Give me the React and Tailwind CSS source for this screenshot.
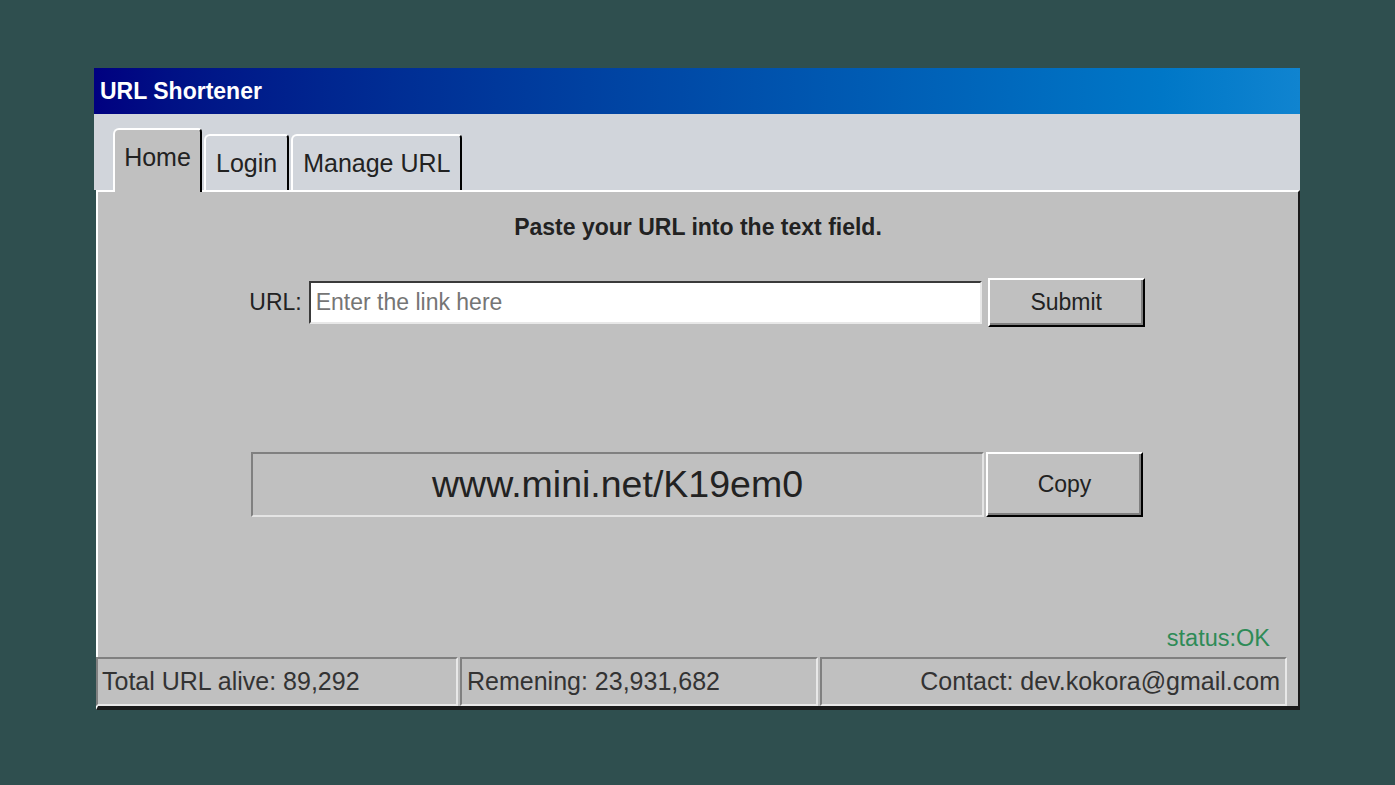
import { useState } from 'react'

const font = { fontFamily: '"Liberation Sans", Arial, sans-serif' }

function Tab({ label, active, onClick }) {
  if (active) {
    return (
      <button
        onClick={onClick}
        className="relative z-10 w-[89px] h-[64px] -mb-[2px] bg-[#c0c0c0] border-t-2 border-l-2 border-r-2 border-t-white border-l-white border-r-black rounded-tl-[6px] rounded-tr-[4px] text-[25px] text-[#222] pb-[6px]"
      >
        {label}
      </button>
    )
  }
  return (
    <button
      onClick={onClick}
      className="h-[56px] px-[10px] bg-[#d1d5db] border-t-2 border-l-2 border-r-2 border-t-white border-l-white border-r-black rounded-tl-[6px] rounded-tr-[4px] text-[25px] text-[#222] pt-[2px]"
    >
      {label}
    </button>
  )
}

export default function App() {
  const [tab, setTab] = useState('Home')
  const [url, setUrl] = useState('')

  return (
    <div className="min-h-[785px] w-full bg-[#2f4f4f] pt-[68px]" style={font}>
      <div className="ml-[94px] w-[1206px] h-[642px] flex flex-col">
        <div className="h-[46px] flex items-center px-[6px] bg-gradient-to-r from-[#000080] to-[#1084d0]">
          <span className="text-white font-bold text-[23px]">URL Shortener</span>
        </div>

        <div className="h-[76px] bg-[#d1d5db] flex items-end pl-[19px] gap-[2px]">
          {['Home', 'Login', 'Manage URL'].map(t => (
            <Tab key={t} label={t} active={tab === t} onClick={() => setTab(t)} />
          ))}
        </div>

        <div className="flex-1 ml-[2px] bg-[#c0c0c0] border-t-2 border-l-2 border-r-2 border-b-[4px] border-t-white border-l-white border-r-[#1a1a1a] border-b-[#1a1a1a] flex flex-col">
          <p className="text-center font-bold text-[23px] text-[#222] mt-[18px]">
            Paste your URL into the text field.
          </p>

          <div className="flex items-center justify-center mt-[33px] pr-[2px]">
            <label className="text-[23px] text-[#222] mr-[7px]">URL:</label>
            <input
              value={url}
              onChange={e => setUrl(e.target.value)}
              placeholder="Enter the link here"
              className="w-[673px] h-[43px] bg-white border-2 border-t-[#3a3a3a] border-l-[#3a3a3a] border-b-[#e8e8e8] border-r-[#e8e8e8] px-[5px] text-[23px] text-[#222] placeholder-[#757575] outline-none"
            />
            <button className="ml-[6px] w-[157px] h-[49px] bg-[#c0c0c0] border-2 border-t-white border-l-white border-r-black border-b-black shadow-[inset_-2px_-2px_#808080] text-[23px] text-[#222]">
              Submit
            </button>
          </div>

          <div className="flex items-center justify-center mt-[125px] pr-[2px]">
            <div className="w-[733px] h-[65px] border-2 border-t-[#808080] border-l-[#808080] border-b-[#e4e4e4] border-r-[#e4e4e4] flex items-center justify-center text-[37.5px] text-[#222]">
              www.mini.net/K19em0
            </div>
            <button className="ml-[2px] w-[157px] h-[65px] bg-[#c0c0c0] border-2 border-t-white border-l-white border-r-black border-b-black shadow-[inset_-2px_-2px_#808080] text-[23px] text-[#222]">
              Copy
            </button>
          </div>

          <div className="mt-auto flex justify-end pr-[28px]">
            <span className="text-[23.5px] text-[#2e8b57]">status:OK</span>
          </div>

          <div className="flex gap-[2px] mt-[1px] -ml-[2px]">
            <div className="w-[362px] h-[49px] border-2 border-t-[#808080] border-l-[#808080] border-b-[#e8e8e8] border-r-[#e8e8e8] flex items-center px-[4px] text-[25px] text-[#333]">
              Total URL alive: 89,292
            </div>
            <div className="w-[358px] h-[49px] border-2 border-t-[#808080] border-l-[#808080] border-b-[#e8e8e8] border-r-[#e8e8e8] flex items-center px-[5px] text-[25px] text-[#333]">
              Remening: 23,931,682
            </div>
            <div className="w-[467px] h-[49px] border-2 border-t-[#808080] border-l-[#808080] border-b-[#e8e8e8] border-r-[#e8e8e8] flex items-center justify-end px-[5px] text-[25px] text-[#333]">
              Contact: dev.kokora@gmail.com
            </div>
          </div>
        </div>
      </div>
    </div>
  )
}
